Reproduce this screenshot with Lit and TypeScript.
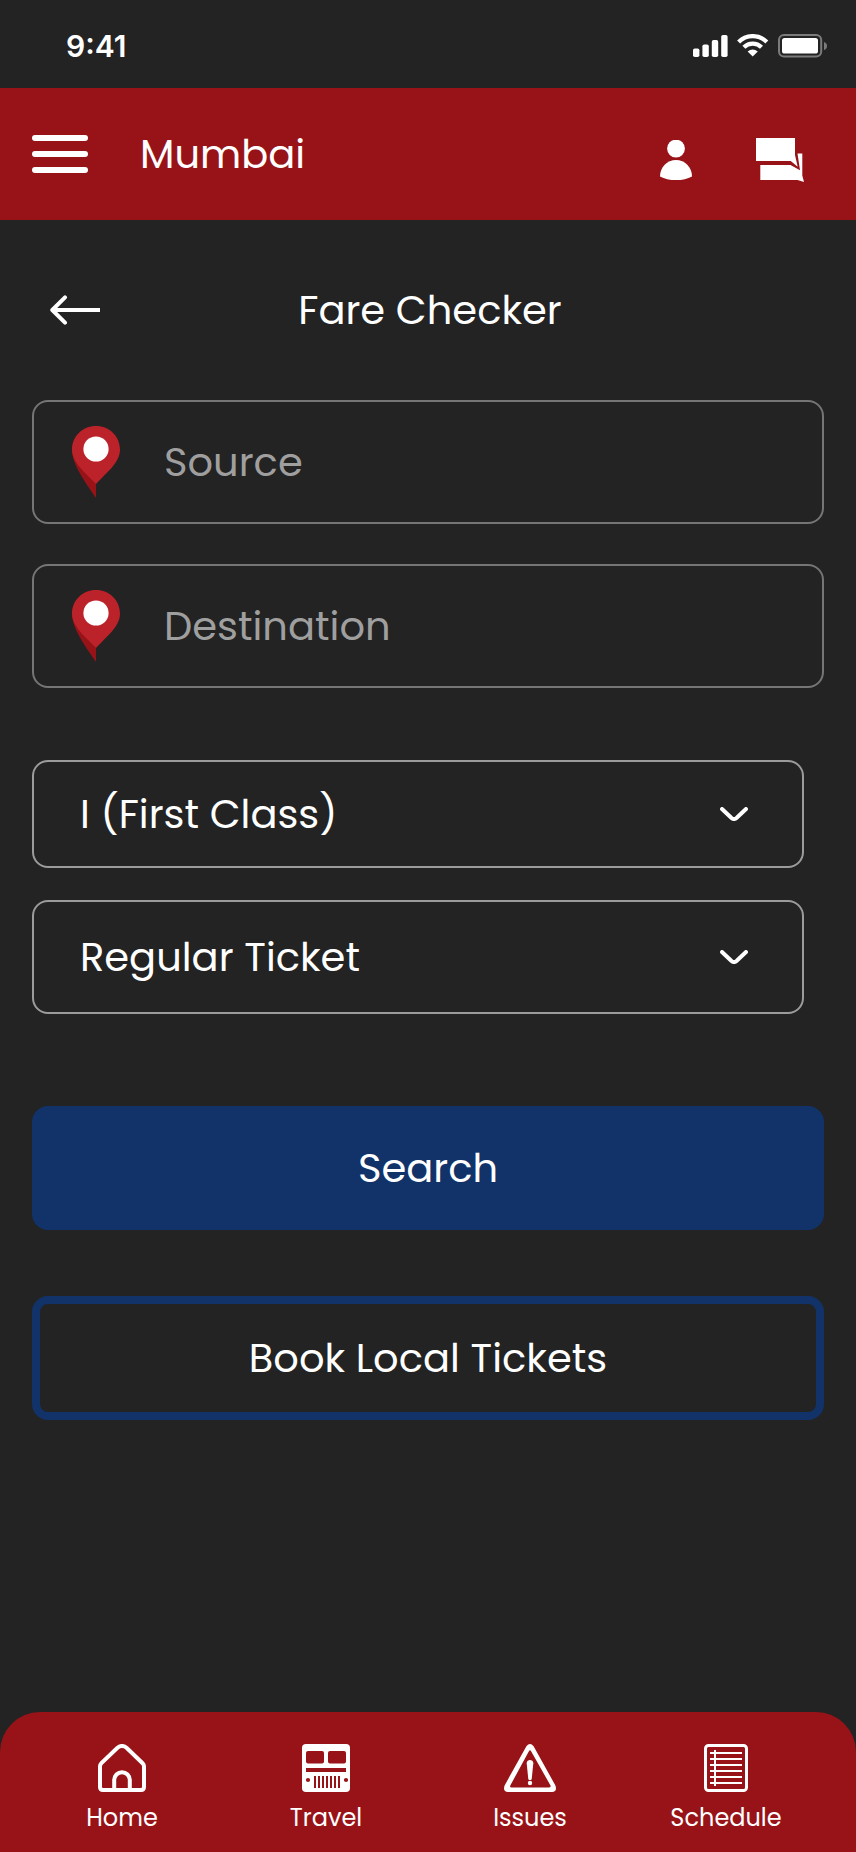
import { LitElement, html, css, svg } from "lit";
import { customElement, property, state } from "lit/decorators.js";

const statusIcons = html`
  <svg width="134" height="24" viewBox="0 0 134 24" aria-hidden="true">
    <g fill="#fff">
      <rect x="0" y="14.5" width="6.4" height="8.5" rx="1.8" />
      <rect x="9.4" y="10.5" width="6.4" height="12.5" rx="1.8" />
      <rect x="18.8" y="6" width="6.4" height="17" rx="1.8" />
      <rect x="28.2" y="1" width="6.4" height="22" rx="1.8" />
      <path d="M59.7 22.6 54.6 17.6Q59.7 13.4 64.8 17.6Z" />
      <rect x="89" y="4" width="36" height="15.5" rx="2.6" />
    </g>
    <g fill="none" stroke="#fff" stroke-width="4.2">
      <path d="M45.6 7.900a20 20 0 0 1 28.200 0" />
      <path d="M50.900 13.200a12.400 12.400 0 0 1 17.600 0" />
    </g>
    <rect x="86" y="1" width="42.2" height="21.6" rx="5" fill="none" stroke="#7b7b7c" stroke-width="2" />
    <path d="M131 8q3 1 3 4t-3 4Z" fill="#7b7b7c" />
  </svg>
`;

const menuIcon = html`
  <svg width="56" height="38" viewBox="0 0 56 38" fill="#fff" aria-hidden="true">
    <rect width="56" height="6" rx="3" />
    <rect y="16" width="56" height="6" rx="3" />
    <rect y="32" width="56" height="6" rx="3" />
  </svg>
`;

const personIcon = html`
  <svg width="32" height="40" viewBox="0 0 32 40" fill="#fff" aria-hidden="true">
    <circle cx="16" cy="8.6" r="8.9" />
    <path d="M0 36.4C0 27.4 7.2 20 16 20s16 7.400 16 16.400Q25.500 40 16 40T0 36.400Z" />
  </svg>
`;

const chatIcon = html`
  <svg width="48" height="44" viewBox="0 0 48 44" fill="#fff" aria-hidden="true">
    <path d="M0 0H39V17L41.700 28.700 34.700 23H0Z" />
    <path d="M4.300 27H34.500L44 32.300 41.500 15.600H46.300V37.500L48 44 41.500 42H4.300Z" />
  </svg>
`;

const backIcon = html`
  <svg width="50" height="30" viewBox="0 0 50 30" fill="none" stroke="#fff" stroke-width="4" stroke-linejoin="round" aria-hidden="true">
    <path d="M15 2.300 2.300 15 15 27.700" stroke-linecap="round" />
    <path d="M3 15H50" />
  </svg>
`;

const pinIcon = html`
  <svg width="48" height="72" viewBox="0 0 48 72" aria-hidden="true">
    <path d="M0 24C0 38 14 58 24 72V50Z" fill="#981318" />
    <path d="M24 0C37.500 0 48 10.500 48 23.500 48 37 34 47 24 58 15 48 0 37 0 23.500 0 10.500 10.500 0 24 0Z" fill="#bb2229" />
    <circle cx="24" cy="23" r="12.600" fill="#fff" />
  </svg>
`;

const chevronIcon = html`
  <svg class="chevron" width="28" height="14" viewBox="0 0 28 14" fill="none" stroke="#fff" stroke-width="4" stroke-linecap="round" aria-hidden="true">
    <path d="M2 2 11.500 10.900Q14 13.100 16.500 10.900L26 2" />
  </svg>
`;

const homeIcon = html`
  <svg width="48" height="48" viewBox="0 0 48 48" fill="none" stroke="#fff" stroke-width="4" aria-hidden="true">
    <path d="M2 22.500Q2 20.600 3.400 19.200L19.200 4Q24 0 28.800 4L44.600 19.200Q46 20.600 46 22.500V43Q46 46 43 46H5Q2 46 2 43Z" />
    <path d="M16.200 46V36a7.800 7.800 0 0 1 15.600 0V46" />
  </svg>
`;

const travelIcon = html`
  <svg width="48" height="48" viewBox="0 0 48 48" aria-hidden="true">
    <rect width="48" height="48" rx="4" fill="#fff" />
    <g fill="#981318">
      <rect x="4" y="7" width="18" height="12.400" rx="2" />
      <rect x="26" y="7" width="18" height="12.400" rx="2" />
      <rect x="4" y="24" width="40" height="4" />
      <circle cx="6" cy="36" r="2.100" />
      <circle cx="44" cy="36" r="2.100" />
      ${[12, 16, 20, 24, 28, 32, 36].map(
        (x) => svg`<rect x=${x} y="32" width="2" height="12" />`
      )}
    </g>
  </svg>
`;

const issuesIcon = html`
  <svg width="52" height="48" viewBox="0 0 52 48" fill="#fff" aria-hidden="true">
    <path fill-rule="evenodd" d="M22.400 2.200Q26-2.200 29.600 2.200L51.400 41.500Q53.500 47.500 48 48H4Q-1.500 47.500 .6 41.500ZM24.900 7.200 6.300 41.500Q5.500 43.500 7.500 43.500H44.500Q47.300 43.500 46.500 41.500L27.100 7.200Q26 5.500 24.900 7.200Z" />
    <path d="M22.700 19.200C22.700 14.900 29.300 14.900 29.300 19.200L27.700 35.200Q26 37 24.300 35.200Z" />
    <circle cx="26" cy="39" r="2.200" />
  </svg>
`;

const scheduleIcon = html`
  <svg width="44" height="48" viewBox="0 0 44 48" fill="none" stroke="#fff" aria-hidden="true">
    <rect x="1.500" y="1.500" width="41" height="45" rx="3" stroke-width="3" />
    <path d="M6 9H38M6 15H38M6 21H38M6 27H38M6 33H38M6 39H38M11 6V42" stroke-width="2" />
  </svg>
`;

@customElement("place-field")
class PlaceField extends LitElement {
  static styles = css`
    :host {
      display: block;
    }
    .field {
      display: flex;
      align-items: center;
      gap: 44px;
      height: 124px;
      padding: 0 38px;
      box-sizing: border-box;
      border: 2px solid #757575;
      border-radius: 16px;
    }
    svg {
      flex: none;
      display: block;
    }
    input {
      flex: 1;
      width: 100%;
      min-width: 0;
      padding: 0;
      border: 0;
      outline: 0;
      background: none;
      color: #fff;
      font: 400 40px/60px Poppins, Inter, sans-serif;
    }
    input::placeholder {
      color: #9f9f9f;
      opacity: 1;
    }
  `;

  @property() name = "";

  render() {
    return html`
      <label class="field">
        ${pinIcon}
        <input type="text" aria-label=${this.name} placeholder=${this.name} />
      </label>
    `;
  }
}

@customElement("option-picker")
class OptionPicker extends LitElement {
  static styles = css`
    :host {
      display: block;
    }
    .picker {
      display: grid;
      align-items: center;
    }
    select,
    .chevron {
      grid-area: 1 / 1;
    }
    select {
      appearance: none;
      width: 100%;
      padding: 22px 88px 22px 46px;
      border: 2px solid #9b9b9b;
      border-radius: 16px;
      background: #232323;
      color: #fff;
      font: 400 40px/60px Poppins, Inter, sans-serif;
    }
    .tall select {
      padding-top: 25px;
      padding-bottom: 25px;
    }
    .chevron {
      justify-self: end;
      margin-right: 56px;
      pointer-events: none;
    }
  `;

  @property() name = "";
  @property({ type: Array }) options: string[] = [];
  @property({ type: Boolean }) tall = false;

  render() {
    return html`
      <div class="picker ${this.tall ? "tall" : ""}">
        <select aria-label=${this.name}>
          ${this.options.map((o) => html`<option>${o}</option>`)}
        </select>
        ${chevronIcon}
      </div>
    `;
  }
}

@customElement("app-root")
class AppRoot extends LitElement {
  static styles = css`
    :host {
      display: flex;
      flex-direction: column;
      min-height: 100vh;
      background: #232323;
      color: #fff;
      font: 400 40px/60px Poppins, Inter, sans-serif;
    }
    svg {
      display: block;
    }
    button {
      padding: 0;
      border: 0;
      background: none;
      color: inherit;
      font: inherit;
      cursor: pointer;
    }
    .status {
      display: flex;
      align-items: center;
      justify-content: space-between;
      height: 88px;
      padding: 4px 29px 0 66px;
      box-sizing: border-box;
    }
    .time {
      font: 600 30px/38px Inter, sans-serif;
    }
    .topbar {
      display: flex;
      align-items: center;
      gap: 52px;
      height: 132px;
      padding: 0 52px 0 32px;
      box-sizing: border-box;
      background: #981318;
    }
    .city {
      flex: 1;
    }
    .actions {
      display: flex;
      align-items: center;
      gap: 64px;
      padding-top: 12px;
    }
    main {
      flex: 1;
      padding: 60px 32px;
    }
    .heading {
      display: grid;
      grid-template-columns: 1fr auto 1fr;
      align-items: center;
      padding: 0 14px 0 18px;
    }
    .back {
      justify-self: start;
    }
    h1 {
      margin: 0;
      font: inherit;
    }
    .places {
      display: grid;
      grid-template-columns: minmax(0, 1fr);
      gap: 40px;
      margin-top: 60px;
    }
    .choices {
      display: grid;
      grid-template-columns: minmax(0, 1fr);
      gap: 32px;
      margin: 72px 20px 92px 0;
    }
    .buttons {
      display: grid;
      gap: 66px;
    }
    .search,
    .book {
      height: 124px;
      border-radius: 16px;
    }
    .search {
      background: #11336a;
    }
    .book {
      border: 8px solid #11336a;
    }
    nav {
      display: grid;
      grid-template-columns: repeat(3, 51fr) 47fr;
      padding: 32px 36px 8px 20px;
      border-radius: 40px 40px 0 0;
      background: #981318;
    }
    .tab {
      display: flex;
      flex-direction: column;
      align-items: center;
      gap: 8px;
      color: #fff;
      font-size: 24px;
      line-height: 36px;
      text-decoration: none;
      padding-bottom: 8px;
    }
  `;

  @state() private tabs = [
    { label: "Home", icon: homeIcon },
    { label: "Travel", icon: travelIcon },
    { label: "Issues", icon: issuesIcon },
    { label: "Schedule", icon: scheduleIcon },
  ];

  render() {
    return html`
      <div class="status">
        <span class="time">9:41</span>
        ${statusIcons}
      </div>
      <header class="topbar">
        <button aria-label="Menu">${menuIcon}</button>
        <span class="city">Mumbai</span>
        <div class="actions">
          <button aria-label="Profile">${personIcon}</button>
          <button aria-label="Messages">${chatIcon}</button>
        </div>
      </header>
      <main>
        <div class="heading">
          <button class="back" aria-label="Back">${backIcon}</button>
          <h1>Fare Checker</h1>
        </div>
        <div class="places">
          <place-field name="Source"></place-field>
          <place-field name="Destination"></place-field>
        </div>
        <div class="choices">
          <option-picker name="Class" .options=${["I (First Class)", "II (Second Class)"]}></option-picker>
          <option-picker name="Ticket type" tall .options=${["Regular Ticket", "Season Ticket"]}></option-picker>
        </div>
        <div class="buttons">
          <button class="search">Search</button>
          <button class="book">Book Local Tickets</button>
        </div>
      </main>
      <nav>
        ${this.tabs.map(
          (t) => html`<a class="tab" href="#">${t.icon}<span>${t.label}</span></a>`
        )}
      </nav>
    `;
  }
}
